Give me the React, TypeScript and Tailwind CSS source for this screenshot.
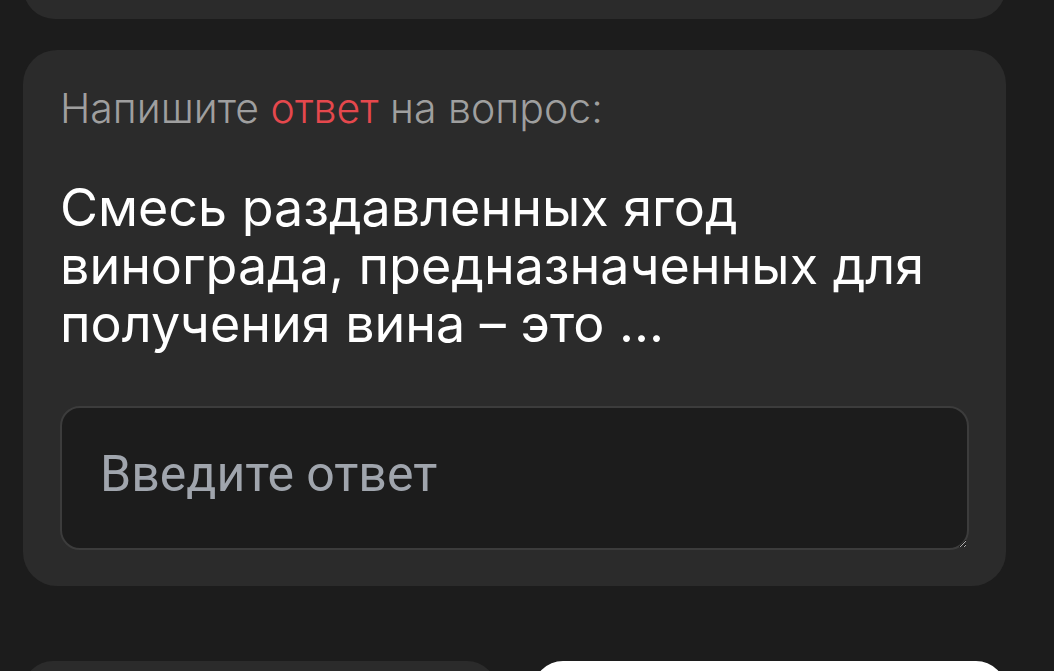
import React from "react";

export default function App() {
  return (
    <div className="h-[671px] overflow-hidden bg-[#1c1c1c] pl-[23px]">
      <div className="w-[983px]">
        <div className="-mt-[80px] h-[99px] rounded-[32px] bg-[#2b2b2b]" />
        <div className="mt-[31px] rounded-[34px] bg-[#2b2b2b] px-[37px] pt-[34px] pb-[36px]">
          <p
            className="text-[41px] leading-[48px] font-light text-[#9f9f9f]"
            style={{ fontFamily: "Inter, 'Noto Sans', sans-serif" }}
          >
            Напишите <span className="text-[#e5484d]">ответ</span> на вопрос:
          </p>
          <p
            className="mt-[47px] text-[52px] leading-[58px] font-normal text-white"
            style={{ fontFamily: "Inter, 'Noto Sans', sans-serif" }}
          >
            Смесь раздавленных ягод винограда, предназначенных для получения вина – это ...
          </p>
          <textarea
            placeholder="Введите ответ"
            className="mt-[53px] block h-[144px] w-full rounded-[20px] border-2 border-[#3c3c3c] bg-[#1c1c1c] pl-[38px] pt-[37px] text-[50px] leading-[58px] text-white placeholder:text-[#a0a5ad] outline-none"
            style={{ fontFamily: "Roboto, 'Liberation Sans', sans-serif" }}
          />
        </div>
        <div className="mt-[75px] grid grid-cols-2 gap-[36px]">
          <div className="h-[60px] rounded-[30px] bg-[#2b2b2b]" />
          <div className="h-[60px] rounded-[30px] bg-white" />
        </div>
      </div>
    </div>
  );
}
